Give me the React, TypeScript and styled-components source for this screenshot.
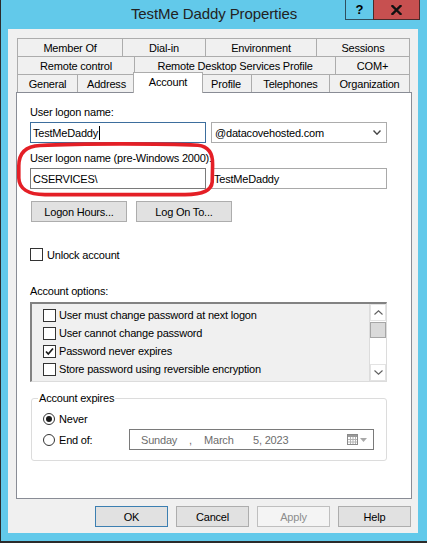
import React from "react";
import styled, { createGlobalStyle } from "styled-components";

const GlobalStyle = createGlobalStyle`
  html, body { margin: 0; padding: 0; background: #ffffff; }
  body {
    font-family: "Liberation Sans", Arial, sans-serif;
    font-size: 11px;
    color: #000;
  }
  * { box-sizing: border-box; }
`;

/* ---------- window frame ---------- */

const Window = styled.div`
  width: 427px;
  height: 543px;
  background: #62c9ea;
  border-left: 1px solid #2b2b2b;
  border-bottom: 2px solid #2b2b2b;
  padding: 0 9px 8px 7px;
  display: flex;
  flex-direction: column;
`;

const TitleBar = styled.div`
  height: 29px;
  margin: 0 -9px 0 -7px;
  display: grid;
  grid-template-columns: 1fr auto 1fr;
  flex: none;
`;

const Title = styled.div`
  grid-column: 2;
  align-self: center;
  font-size: 15px;
  letter-spacing: -0.1px;
  color: #222;
  line-height: 18px;
  padding-bottom: 1px;
`;

const CaptionButtons = styled.div`
  grid-column: 3;
  justify-self: end;
  align-self: start;
  margin-right: 7px;
  display: flex;
`;

const HelpButton = styled.div`
  width: 28px;
  height: 20px;
  border-left: 1px solid #2f4f5f;
  border-bottom: 1px solid #2f4f5f;
  display: flex;
  align-items: center;
  justify-content: center;
  font-weight: bold;
  font-size: 13px;
  color: #000;
  padding-bottom: 1px;
`;

const CloseButton = styled.div`
  width: 47px;
  height: 20px;
  background: #c75050;
  border: 1px solid #4a2a2a;
  border-top: none;
  display: flex;
  align-items: center;
  justify-content: center;
`;

const Client = styled.div`
  flex: 1;
  background: #f0f0f0;
  padding: 9px 6px 6px 8px;
  display: flex;
  flex-direction: column;
`;

/* ---------- tabs ---------- */

const TabStrip = styled.div`
  display: flex;
  flex-direction: column;
  margin-left: 1px;
`;

const TabRow = styled.div`
  display: flex;
  align-items: flex-start;
  height: 19px;
  & + & { margin-top: -1px; }
`;

const Tab = styled.div<{ $w: number; $active?: boolean }>`
  flex: none;
  width: ${(p) => (p.$active ? p.$w + 4 : p.$w)}px;
  height: ${(p) => (p.$active ? 21 : 19)}px;
  margin: ${(p) => (p.$active ? "-2px -2px 0 -3px" : "0 0 0 -1px")};
  &:first-child { margin-left: 0; }
  border: 1px solid #acacac;
  border-bottom: ${(p) => (p.$active ? "none" : "1px solid #acacac")};
  background: ${(p) => (p.$active ? "#ffffff" : "#f0f0f0")};
  display: flex;
  align-items: center;
  justify-content: center;
  padding-bottom: ${(p) => (p.$active ? 2 : 0)}px;
  letter-spacing: -0.2px;
  white-space: nowrap;
  position: relative;
  z-index: ${(p) => (p.$active ? 2 : 0)};
`;

/* ---------- page body ---------- */

const Panel = styled.div`
  position: relative;
  margin-top: -1px;
  width: 396px;
  height: 407px;
  flex: none;
  background: #ffffff;
  border: 1px solid #898c95;
  padding: 12px 13px 0 13px;
  display: flex;
  flex-direction: column;
`;

const Label = styled.div<{ $gap?: number }>`
  height: 15px;
  line-height: 15px;
  letter-spacing: -0.2px;
  margin-top: ${(p) => p.$gap ?? 0}px;
  white-space: nowrap;
`;

const FieldRow = styled.div`
  display: flex;
  gap: 5px;
  margin-top: 2px;
`;

const TextBox = styled.div<{ $tone?: "focus" | "normal" | "soft" }>`
  width: 176px;
  height: 21px;
  border: 1px solid
    ${(p) =>
      p.$tone === "focus" ? "#3d6e9d" : p.$tone === "soft" ? "#a9a9a9" : "#7a7a7a"};
  background: #ffffff;
  padding-left: 2px;
  display: flex;
  align-items: center;
  letter-spacing: -0.2px;
  white-space: nowrap;
`;

const Caret = styled.span`
  display: inline-block;
  width: 1px;
  height: 14px;
  background: #000;
  margin-left: 1px;
`;

const Select = styled.div`
  width: 176px;
  height: 21px;
  border: 1px solid #acacac;
  background: #ffffff;
  padding: 0 5px 0 3px;
  display: flex;
  align-items: center;
  justify-content: space-between;
  letter-spacing: -0.2px;
  white-space: nowrap;
`;

const ButtonRow = styled.div<{ $gap: number }>`
  display: flex;
  gap: 9px;
  margin-top: ${(p) => p.$gap}px;
`;

const PushButton = styled.div<{ $w: number; $variant?: "default" | "disabled" }>`
  width: ${(p) => p.$w}px;
  height: 21px;
  flex: none;
  border: 1px solid
    ${(p) =>
      p.$variant === "default" ? "#3c7fb1" : p.$variant === "disabled" ? "#bfbfbf" : "#adadad"};
  background: ${(p) => (p.$variant === "disabled" ? "#f4f4f4" : "#e1e1e1")};
  color: ${(p) => (p.$variant === "disabled" ? "#8d8d8d" : "#000")};
  display: flex;
  align-items: center;
  justify-content: center;
  letter-spacing: -0.2px;
  white-space: nowrap;
`;

const CheckRow = styled.div<{ $gap?: number }>`
  display: flex;
  align-items: center;
  gap: 4px;
  height: 15px;
  margin-top: ${(p) => p.$gap ?? 0}px;
  letter-spacing: -0.2px;
  white-space: nowrap;
`;

const Box = styled.span`
  width: 13px;
  height: 13px;
  flex: none;
  border: 1px solid #333;
  background: #fff;
  display: flex;
  align-items: center;
  justify-content: center;
`;

const ListBox = styled.div`
  margin-top: 3px;
  width: 357px;
  height: 80px;
  flex: none;
  display: flex;
  border: 1px solid #dcdcdc;
  border-top: 2px solid #828282;
  border-left: 2px solid #828282;
  background: #f0f0f0;
`;

const ListItems = styled.div`
  flex: 1;
  padding: 2px 0 0 11px;
  display: flex;
  flex-direction: column;
`;

const ListItem = styled.div`
  height: 18px;
  display: flex;
  align-items: center;
  gap: 3px;
  letter-spacing: -0.2px;
  white-space: nowrap;
`;

const ScrollBar = styled.div`
  width: 17px;
  flex: none;
  background: #ffffff;
  border-left: 1px solid #dcdcdc;
  display: flex;
  flex-direction: column;
`;

const ScrollArrow = styled.div`
  height: 17px;
  flex: none;
  border: 1px solid #e3e3e3;
  display: flex;
  align-items: center;
  justify-content: center;
`;

const ScrollThumb = styled.div`
  height: 16px;
  flex: none;
  margin-top: 1px;
  background: #dadada;
  border: 1px solid #a6a6a6;
`;

const ScrollTrack = styled.div`
  flex: 1;
`;

const GroupBox = styled.fieldset`
  margin: 9px 0 0 1px;
  width: 356px;
  border: 1px solid #dcdcdc;
  border-radius: 3px;
  padding: 5px 0 10px 11px;
  min-width: 0;
`;

const Legend = styled.legend`
  padding: 0 1px;
  margin-left: -5px;
  height: 15px;
  line-height: 15px;
  letter-spacing: -0.2px;
`;

const RadioRow = styled.div`
  display: grid;
  grid-template-columns: 86px auto;
  align-items: center;
  min-height: 16px;
  & + & { margin-top: 2px; }
`;

const RadioLabel = styled.label`
  display: flex;
  align-items: center;
  gap: 4px;
  letter-spacing: -0.2px;
  white-space: nowrap;
`;

const RadioCircle = styled.span<{ $on?: boolean }>`
  width: 12px;
  height: 12px;
  flex: none;
  border-radius: 50%;
  border: 1px solid #333;
  background: #fff;
  display: flex;
  align-items: center;
  justify-content: center;
  &::after {
    content: "";
    width: 6px;
    height: 6px;
    border-radius: 50%;
    background: ${(p) => (p.$on ? "#1a1a1a" : "transparent")};
  }
`;

const DatePicker = styled.div`
  width: 245px;
  height: 21px;
  border: 1px solid #7a7a7a;
  background: #ffffff;
  display: grid;
  grid-template-columns: 48px 15px 49px 1fr auto;
  align-items: center;
  padding: 0 6px 0 11px;
  color: #6d6d6d;
  letter-spacing: -0.2px;
  white-space: nowrap;
`;

const DateTools = styled.div`
  display: flex;
  align-items: center;
  gap: 2px;
`;

const FooterButtons = styled.div`
  display: flex;
  justify-content: flex-end;
  gap: 8px;
  margin: 7px 1px 0 0;
`;

const Annotation = styled.svg`
  position: absolute;
  left: -2px;
  top: 47px;
  pointer-events: none;
`;

/* ---------- drawings ---------- */

const CloseGlyph = () => (
  <svg width="11" height="10" viewBox="0 0 11 10">
    <path d="M1.5 1 L9.5 9 M9.5 1 L1.5 9" stroke="#111" strokeWidth="2.4" strokeLinecap="square" />
  </svg>
);

const CheckGlyph = () => (
  <svg width="11" height="11" viewBox="0 0 11 11">
    <path d="M2 5.5 L4.3 8 L9 2.5" stroke="#1a1a1a" strokeWidth="1.7" fill="none" />
  </svg>
);

const Chevron = ({ up, color = "#444", w = 8, h = 5, sw = 1.4 }: { up?: boolean; color?: string; w?: number; h?: number; sw?: number }) => (
  <svg width={w} height={h} viewBox={`0 0 ${w} ${h}`}>
    <path
      d={up ? `M0.5 ${h - 0.5} L${w / 2} 0.8 L${w - 0.5} ${h - 0.5}` : `M0.5 0.5 L${w / 2} ${h - 0.8} L${w - 0.5} 0.5`}
      stroke={color}
      strokeWidth={sw}
      fill="none"
    />
  </svg>
);

const CalendarGlyph = () => (
  <svg width="11" height="11" viewBox="0 0 11 11">
    <rect x="0.5" y="0.5" width="10" height="10" fill="#fff" stroke="#8a8a8a" />
    <rect x="1" y="1" width="9" height="2" fill="#9a9a9a" />
    <path d="M1 5.5 H10 M1 8 H10 M3.5 3 V10 M6 3 V10 M8.5 3 V10" stroke="#b5b5b5" strokeWidth="1" />
  </svg>
);

const DropTriangle = () => (
  <svg width="7" height="4" viewBox="0 0 7 4">
    <path d="M0 0 H7 L3.5 4 Z" fill="#a8a8a8" />
  </svg>
);

/* ---------- data ---------- */

type TabSpec = { label: string; w: number; active?: boolean };

const tabRows: TabSpec[][] = [
  [
    { label: "Member Of", w: 106 },
    { label: "Dial-in", w: 84 },
    { label: "Environment", w: 112 },
    { label: "Sessions", w: 94 },
  ],
  [
    { label: "Remote control", w: 118 },
    { label: "Remote Desktop Services Profile", w: 202 },
    { label: "COM+", w: 75 },
  ],
  [
    { label: "General", w: 61 },
    { label: "Address", w: 59 },
    { label: "Account", w: 66, active: true },
    { label: "Profile", w: 52 },
    { label: "Telephones", w: 79 },
    { label: "Organization", w: 81 },
  ],
];

const accountOptions = [
  { label: "User must change password at next logon", checked: false },
  { label: "User cannot change password", checked: false },
  { label: "Password never expires", checked: true },
  { label: "Store password using reversible encryption", checked: false },
];

export default function App() {
  return (
    <>
      <GlobalStyle />
      <Window>
        <TitleBar>
          <Title>TestMe Daddy Properties</Title>
          <CaptionButtons>
            <HelpButton>?</HelpButton>
            <CloseButton>
              <CloseGlyph />
            </CloseButton>
          </CaptionButtons>
        </TitleBar>

        <Client>
          <TabStrip>
            {tabRows.map((row, i) => (
              <TabRow key={i}>
                {row.map((t) => (
                  <Tab key={t.label} $w={t.w} $active={t.active}>
                    {t.label}
                  </Tab>
                ))}
              </TabRow>
            ))}
          </TabStrip>

          <Panel>
            <Label>User logon name:</Label>
            <FieldRow>
              <TextBox $tone="focus">
                TestMeDaddy
                <Caret />
              </TextBox>
              <Select>
                <span>@datacovehosted.com</span>
                <Chevron />
              </Select>
            </FieldRow>

            <Label $gap={8}>User logon name (pre-Windows 2000):</Label>
            <FieldRow>
              <TextBox>CSERVICES\</TextBox>
              <TextBox $tone="soft">TestMeDaddy</TextBox>
            </FieldRow>

            <ButtonRow $gap={12}>
              <PushButton $w={96} style={{ marginLeft: 1 }}>
                Logon Hours...
              </PushButton>
              <PushButton $w={96}>Log On To...</PushButton>
            </ButtonRow>

            <CheckRow $gap={25}>
              <Box />
              Unlock account
            </CheckRow>

            <Label $gap={22}>Account options:</Label>
            <ListBox>
              <ListItems>
                {accountOptions.map((o) => (
                  <ListItem key={o.label}>
                    <Box>{o.checked && <CheckGlyph />}</Box>
                    {o.label}
                  </ListItem>
                ))}
              </ListItems>
              <ScrollBar>
                <ScrollArrow>
                  <Chevron up color="#606060" w={9} h={5} sw={1.1} />
                </ScrollArrow>
                <ScrollThumb />
                <ScrollTrack />
                <ScrollArrow>
                  <Chevron color="#606060" w={9} h={5} sw={1.1} />
                </ScrollArrow>
              </ScrollBar>
            </ListBox>

            <GroupBox>
              <Legend>Account expires</Legend>
              <RadioRow>
                <RadioLabel>
                  <RadioCircle $on />
                  Never
                </RadioLabel>
              </RadioRow>
              <RadioRow>
                <RadioLabel>
                  <RadioCircle />
                  End of:
                </RadioLabel>
                <DatePicker>
                  <span>Sunday</span>
                  <span>,</span>
                  <span>March</span>
                  <span>5, 2023</span>
                  <DateTools>
                    <CalendarGlyph />
                    <DropTriangle />
                  </DateTools>
                </DatePicker>
              </RadioRow>
            </GroupBox>

            <Annotation width="202" height="60" viewBox="15 140 202 60">
              <path
                d="M40 145.5 C80 143.4, 160 143.4, 198 145.3 C209 146.5, 213 154, 212.6 165 L212.2 182 C211.5 191, 201 194.6, 185 194.6 L45 194.6 C28 194.6, 19 188.5, 18.8 178 L18.8 166 C18.8 152, 27 146, 40 145.5 Z"
                fill="none"
                stroke="#e41f26"
                strokeWidth="3.6"
              />
            </Annotation>
          </Panel>

          <FooterButtons>
            <PushButton $w={73} $variant="default">OK</PushButton>
            <PushButton $w={73}>Cancel</PushButton>
            <PushButton $w={73} $variant="disabled">Apply</PushButton>
            <PushButton $w={73}>Help</PushButton>
          </FooterButtons>
        </Client>
      </Window>
    </>
  );
}
